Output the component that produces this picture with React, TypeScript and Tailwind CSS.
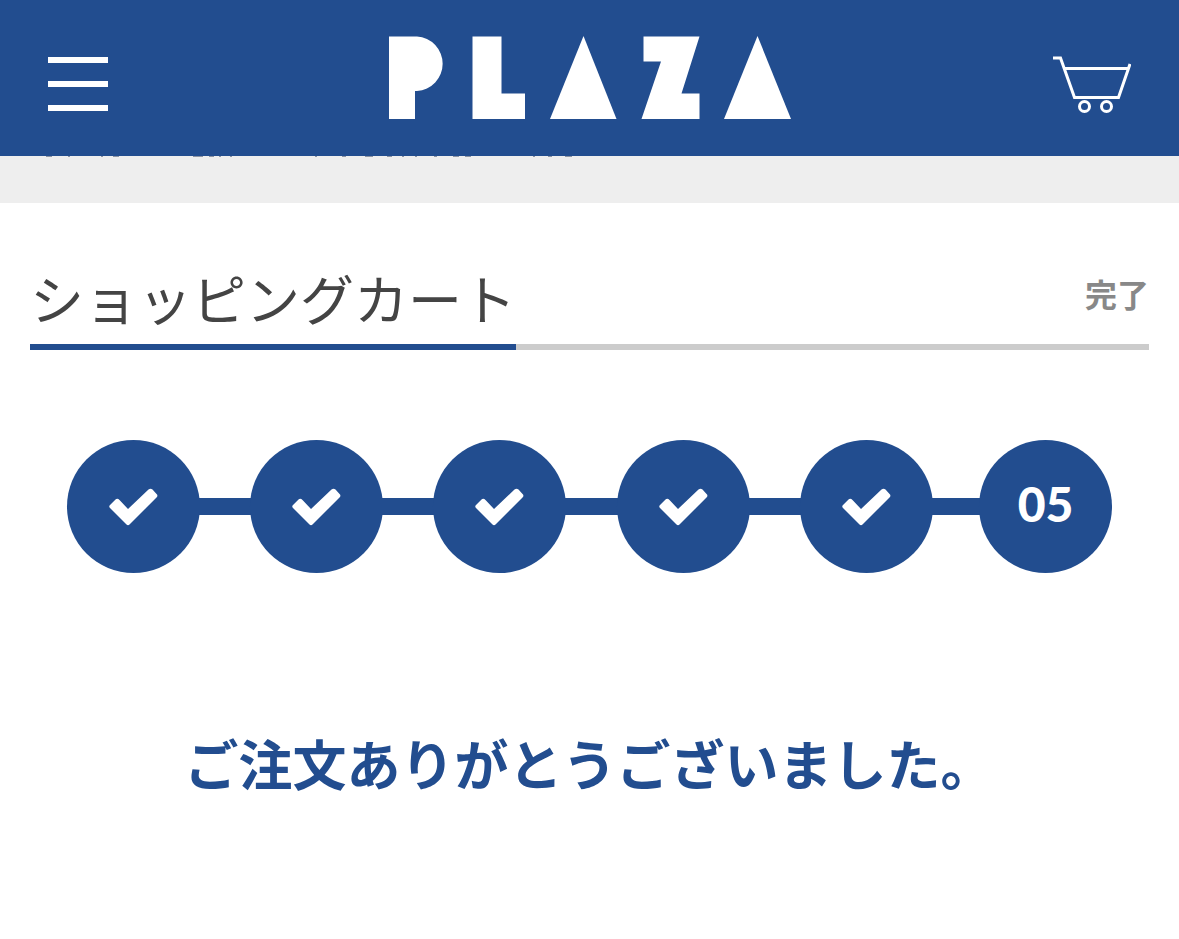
import { Fragment } from 'react';
import { clsx } from 'clsx';

const steps = [
  { id: '00', done: true },
  { id: '01', done: true },
  { id: '02', done: true },
  { id: '03', done: true },
  { id: '04', done: true },
  { id: '05', done: false },
];

function Logo() {
  return (
    <svg viewBox="0 0 402 83" className="w-[402px] h-[83px]" fill="#fff" role="img" aria-label="PLAZA">
      <path d="M0 0.5H28A27.3 27.3 0 0 1 28 55H26V83H0Z" />
      <path d="M83.5 0.5H112.5V57.5H136V83H83.5Z" />
      <path d="M194.5 0L227.5 83H161Z" />
      <path d="M254.5 0.5H310.5L292.5 57.5H310.5V83H252.5L272 25.5H254.5Z" />
      <path d="M368.5 0L402 83H335Z" />
    </svg>
  );
}

function CartIcon() {
  return (
    <svg viewBox="0 0 78 57" className="w-[78px] h-[57px]" fill="none" stroke="#fff" strokeWidth="3" aria-hidden="true">
      <path d="M0 2H7.5L21.5 41.5H65.5L77 8" />
      <path d="M12 12.5H75" />
      <circle cx="31.5" cy="50.5" r="5" />
      <circle cx="53.5" cy="50.5" r="5" />
    </svg>
  );
}

function CheckIcon() {
  return (
    <svg viewBox="0 0 49 38" className="w-[49px] h-[38px]" fill="#fff" aria-label="完了済み">
      <path d="M1 17L6.5 11.5Q8.5 10 10.5 12L19 21L39.5 1.5Q41.5 0 43.5 1.5L48 6.5Q49 8 47.5 9.5L20.5 36.5Q19 38 17.5 36.5L1 20Q-0.5 18.5 1 17Z" />
    </svg>
  );
}

function Header() {
  return (
    <header className="flex h-[156px] items-center justify-between bg-[#224d8f] px-12">
      <button type="button" aria-label="メニュー" className="flex w-20 flex-col gap-[18px] pt-3">
        <span className="h-1.5 w-[60px] bg-white" />
        <span className="h-1.5 w-[60px] bg-white" />
        <span className="h-1.5 w-[60px] bg-white" />
      </button>
      <a href="#" className="pb-0.5">
        <Logo />
      </a>
      <a href="#" aria-label="カート" className="flex w-20 justify-end pt-3">
        <CartIcon />
      </a>
    </header>
  );
}

function Steps() {
  return (
    <ol className="mt-[90px] flex items-center px-[67px]">
      {steps.map((step, i) => (
        <Fragment key={step.id}>
          {i > 0 && (
            <li
              aria-hidden="true"
              className={clsx('-mx-1 h-[17px] bg-[#224d8f]', step.done ? 'grow-[58] basis-0' : 'grow-[54] basis-0')}
            />
          )}
          <li className="flex size-[133px] shrink-0 items-center justify-center rounded-full bg-[#224d8f]">
            {step.done ? (
              <CheckIcon />
            ) : (
              <span className="pb-1.5 font-['Lato',sans-serif] text-[48px] leading-[52px] font-black text-white">
                {step.id}
              </span>
            )}
          </li>
        </Fragment>
      ))}
    </ol>
  );
}

export default function App() {
  return (
    <div className="min-h-screen bg-white font-['Liberation_Sans','Noto_Sans_CJK_JP',sans-serif]">
      <Header />
      <div className="h-[47px] bg-[#eee]">
        <svg viewBox="0 0 600 1" className="h-px w-[600px]" stroke="#8b93a3" aria-hidden="true">
          <path d="M46 0.5h6M68 0.5h2M101 0.5h2M113 0.5h6M193 0.5h10M209 0.5h5M219 0.5h2M230 0.5h2M315 0.5h2M342 0.5h4M365 0.5h8M387 0.5h5M402 0.5h2M415 0.5h2M434 0.5h3M453 0.5h6M465 0.5h6M533 0.5h2M548 0.5h4M565 0.5h7" />
        </svg>
      </div>
      <main>
        <div className="mx-[30px] mt-[61px] flex items-start justify-between border-b-6 border-[#ccc]">
          <h1 className="-mb-1.5 border-b-6 border-[#224d8f] pb-1 text-[54px] leading-[76px] text-[#444]">
            ショッピングカート
          </h1>
          <p className="pt-2 text-[32px] leading-[48px] font-bold text-[#888]">完了</p>
        </div>
        <Steps />
        <p className="mt-[154px] text-center text-[54px] leading-[80px] font-bold text-[#224d8f]">
          ご注文ありがとうございました。
        </p>
      </main>
    </div>
  );
}
